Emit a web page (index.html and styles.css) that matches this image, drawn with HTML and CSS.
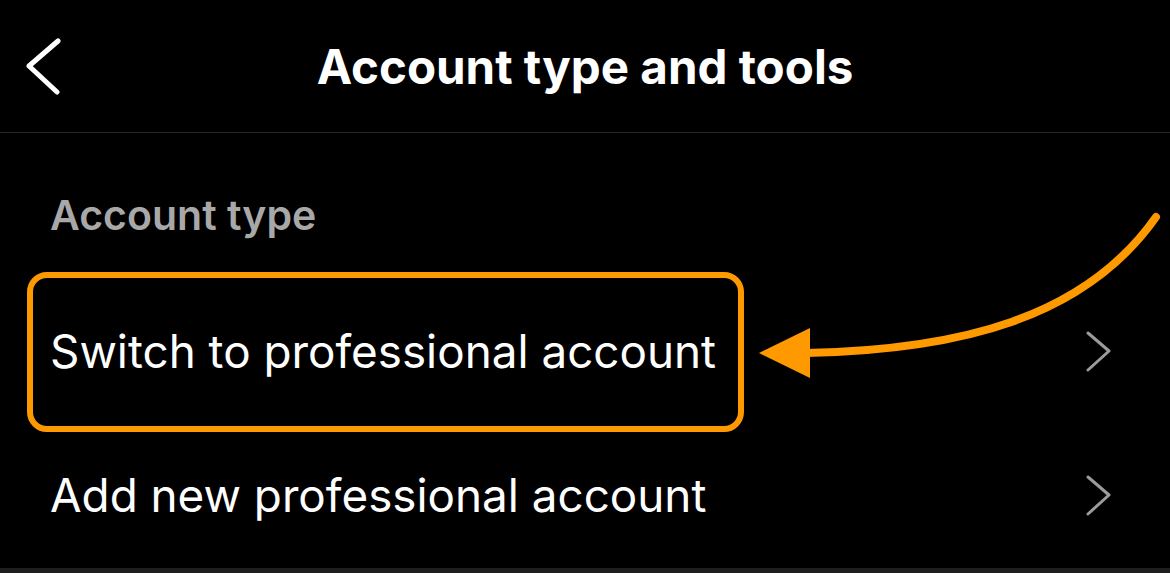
FILE: index.html
```html
<!DOCTYPE html>
<html lang="en">
<head>
  <meta charset="UTF-8" />
  <meta name="viewport" content="width=device-width, initial-scale=1.0" />
  <title>Account type and tools</title>
  <link rel="stylesheet" href="styles.css">
</head>
<body>
  <div class="screen">
    <header class="topbar">
      <button class="back" aria-label="Back">
        <svg width="40" height="60" viewBox="0 0 40 60">
          <polyline points="32,6 3,31 31,57" fill="none" stroke="#fff" stroke-width="5" stroke-linecap="round" stroke-linejoin="round"/>
        </svg>
      </button>
      <h1>Account type and tools</h1>
    </header>

    <div class="section-title">Account type</div>

    <a class="row" href="#">
      <span class="row-label highlight">Switch to professional account</span>
      <svg class="chevron" width="26" height="42" viewBox="0 0 26 42">
        <polyline points="2,2 23,20 2,39" fill="none" stroke="#9b9b9b" stroke-width="3" stroke-linecap="round" stroke-linejoin="round"/>
      </svg>
    </a>

    <a class="row" href="#">
      <span class="row-label">Add new professional account</span>
      <svg class="chevron" width="26" height="42" viewBox="0 0 26 42">
        <polyline points="2,2 23,20 2,39" fill="none" stroke="#9b9b9b" stroke-width="3" stroke-linecap="round" stroke-linejoin="round"/>
      </svg>
    </a>

    <div class="bottom-edge"></div>

    <!-- annotation arrow -->
    <svg class="arrow" width="1170" height="573" viewBox="0 0 1170 573">
      <path d="M1156 217 C 1085 318, 960 350, 806 353" fill="none" stroke="#ff9900" stroke-width="8" stroke-linecap="round"/>
      <polygon points="759,353 810,328 810,378" fill="#ff9900"/>
    </svg>
  </div>
</body>
</html>
```

FILE: styles.css
```css
* {
  box-sizing: border-box;
}
body {
  margin: 0;
  background: #000;
  color: #fff;
  font-family: Inter, "Noto Sans", "Liberation Sans", sans-serif;
}
.screen {
  position: relative;
  width: 1170px;
  height: 573px;
  overflow: hidden;
  display: flex;
  flex-direction: column;
}
.topbar {
  position: relative;
  height: 133px;
  border-bottom: 1px solid #262626;
  display: flex;
  align-items: center;
  justify-content: center;
}
.topbar h1 {
  margin: 0;
  font-size: 47.5px;
  font-weight: 700;
  padding-top: 2px;
}
.back {
  position: absolute;
  left: 26px;
  top: 35px;
  background: none;
  border: none;
  padding: 0;
}
.section-title {
  height: 148px;
  padding: 60px 0 0 50px;
  font-size: 41px;
  line-height: 44px;
  font-weight: 600;
  color: #a8a8a8;
}
.row {
  height: 144px;
  padding: 0 58px 0 50px;
  display: flex;
  align-items: center;
  justify-content: space-between;
  color: #fff;
  text-decoration: none;
}
.row-label {
  font-size: 45.8px;
  line-height: 50px;
}
.highlight {
  border: 6px solid #ff9900;
  border-radius: 20px;
  padding: 49px 22px 49px 17px;
  margin-left: -23px;
}
.chevron {
  display: block;
}
.bottom-edge {
  margin-top: auto;
  height: 5px;
  background: #1e1e1e;
}
.arrow {
  position: absolute;
  left: 0;
  top: 0;
  pointer-events: none;
}
```
